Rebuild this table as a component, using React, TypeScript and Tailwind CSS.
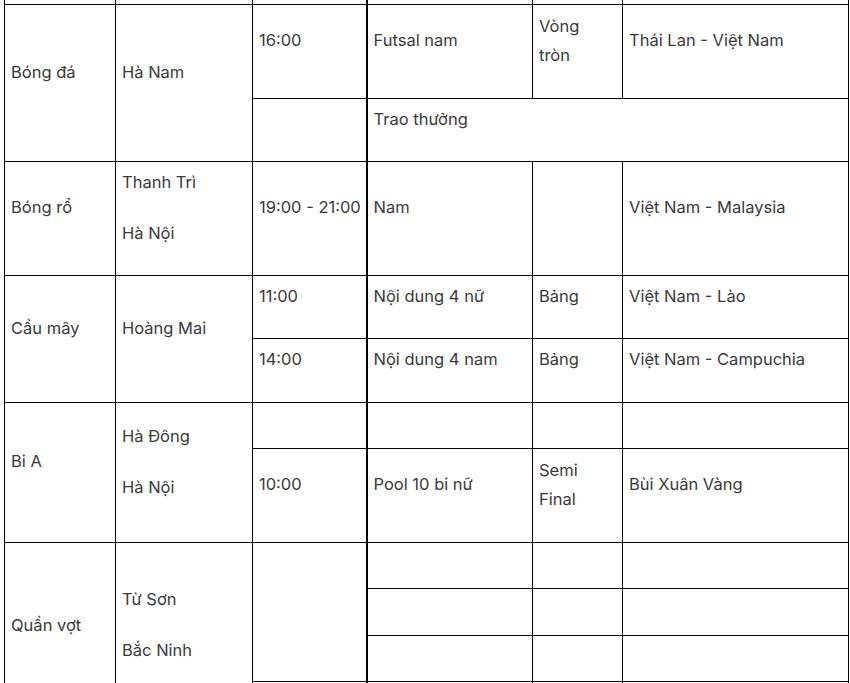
const cell = "border border-black px-[6px] py-[5px] align-middle";
const thick = "border-l-2";
const narrow = "pr-[14px]";

function P({ children }: { children?: React.ReactNode }) {
  return <p className="mb-[22px] leading-[29px]">{children}</p>;
}

export default function App() {
  return (
    <div className="h-[683px] overflow-hidden bg-white pl-[4px]">
      <table
        className="-mt-[36px] w-[844px] table-fixed border-collapse text-[16.5px] text-[#3a3a3a]"
        style={{ fontFamily: "Inter, 'Noto Sans', sans-serif" }}
      >
        <colgroup>
          <col className="w-[111px]" />
          <col className="w-[137px]" />
          <col className="w-[114px]" />
          <col className="w-[166px]" />
          <col className="w-[90px]" />
          <col className="w-[226px]" />
        </colgroup>
        <tbody>
          {/* previous row, scrolled out of view */}
          <tr className="h-[40px]">
            <td className={cell} />
            <td className={cell} />
            <td className={cell} />
            <td className={`${cell} ${thick}`} />
            <td className={cell} />
            <td className={cell} />
          </tr>

          {/* Bóng đá */}
          <tr className="h-[94px]">
            <td className={cell} rowSpan={2}>
              <P>Bóng đá</P>
            </td>
            <td className={cell} rowSpan={2}>
              <P>Hà Nam</P>
            </td>
            <td className={cell}>
              <P>16:00</P>
            </td>
            <td className={`${cell} ${thick}`}>
              <P>Futsal nam</P>
            </td>
            <td className={`${cell} ${narrow}`}>
              <P>Vòng tròn</P>
            </td>
            <td className={cell}>
              <P>Thái Lan - Việt Nam</P>
            </td>
          </tr>
          <tr className="h-[63px]">
            <td className={cell} />
            <td className={`${cell} ${thick}`} colSpan={3}>
              <P>Trao thưởng</P>
            </td>
          </tr>

          {/* Bóng rổ */}
          <tr className="h-[114px]">
            <td className={cell}>
              <P>Bóng rổ</P>
            </td>
            <td className={cell}>
              <P>Thanh Trì</P>
              <P>Hà Nội</P>
            </td>
            <td className={`${cell} whitespace-nowrap`}>
              <P>19:00 - 21:00</P>
            </td>
            <td className={`${cell} ${thick}`}>
              <P>Nam</P>
            </td>
            <td className={cell} />
            <td className={cell}>
              <P>Việt Nam - Malaysia</P>
            </td>
          </tr>

          {/* Cầu mây */}
          <tr className="h-[63px]">
            <td className={cell} rowSpan={2}>
              <P>Cầu mây</P>
            </td>
            <td className={cell} rowSpan={2}>
              <P>Hoàng Mai</P>
            </td>
            <td className={cell}>
              <P>11:00</P>
            </td>
            <td className={`${cell} ${thick}`}>
              <P>Nội dung 4 nữ</P>
            </td>
            <td className={cell}>
              <P>Bảng</P>
            </td>
            <td className={cell}>
              <P>Việt Nam - Lào</P>
            </td>
          </tr>
          <tr className="h-[64px]">
            <td className={cell}>
              <P>14:00</P>
            </td>
            <td className={`${cell} ${thick}`}>
              <P>Nội dung 4 nam</P>
            </td>
            <td className={cell}>
              <P>Bảng</P>
            </td>
            <td className={cell}>
              <P>Việt Nam - Campuchia</P>
            </td>
          </tr>

          {/* Bi A */}
          <tr className="h-[46px]">
            <td className={cell} rowSpan={2}>
              <P>Bi A</P>
            </td>
            <td className={cell} rowSpan={2}>
              <P>Hà Đông</P>
              <P>Hà Nội</P>
            </td>
            <td className={cell} />
            <td className={`${cell} ${thick}`} />
            <td className={cell} />
            <td className={cell} />
          </tr>
          <tr className="h-[94px]">
            <td className={cell}>
              <P>10:00</P>
            </td>
            <td className={`${cell} ${thick}`}>
              <P>Pool 10 bi nữ</P>
            </td>
            <td className={`${cell} ${narrow}`}>
              <P>Semi Final</P>
            </td>
            <td className={cell}>
              <P>Bùi Xuân Vàng</P>
            </td>
          </tr>

          {/* Quần vợt */}
          <tr className="h-[46px]">
            <td className={cell} rowSpan={4}>
              <P>Quần vợt</P>
            </td>
            <td className={cell} rowSpan={4}>
              <P>Từ Sơn</P>
              <P>Bắc Ninh</P>
            </td>
            <td className={cell} rowSpan={3} />
            <td className={`${cell} ${thick}`} />
            <td className={cell} />
            <td className={cell} />
          </tr>
          <tr className="h-[47px]">
            <td className={`${cell} ${thick}`} />
            <td className={cell} />
            <td className={cell} />
          </tr>
          <tr className="h-[46px]">
            <td className={`${cell} ${thick}`} />
            <td className={cell} />
            <td className={cell} />
          </tr>
          <tr className="h-[48px]">
            <td className={cell} />
            <td className={`${cell} ${thick}`} />
            <td className={cell} />
            <td className={cell} />
          </tr>
        </tbody>
      </table>
    </div>
  );
}
